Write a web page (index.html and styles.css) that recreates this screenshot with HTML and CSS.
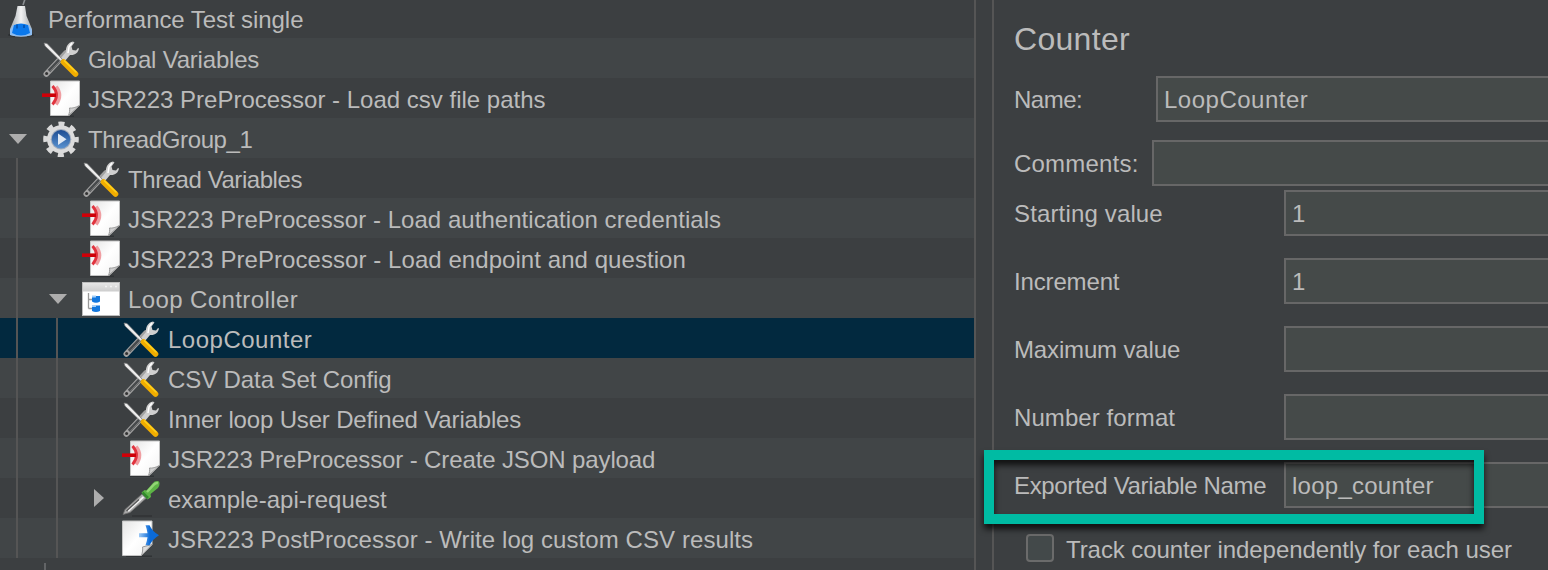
FILE: index.html
```html
<!DOCTYPE html>
<html lang="en">
<head>
<meta charset="utf-8">
<title>Performance Test single</title>
<link rel="stylesheet" href="styles.css">
</head>
<body>
<svg class="defs" width="0" height="0">
  <defs>
    <linearGradient id="paper" x1="0" y1="0" x2="1" y2="1"><stop offset="0" stop-color="#e4e4e4"/><stop offset=".5" stop-color="#fff"/><stop offset="1" stop-color="#f2f2f2"/></linearGradient>
    <linearGradient id="bar" x1="0" y1="0" x2="0" y2="1"><stop offset="0" stop-color="#e6e6e6"/><stop offset="1" stop-color="#cdcdcd"/></linearGradient>
    <linearGradient id="glass" x1="0" y1="0" x2="1" y2="0"><stop offset="0" stop-color="#a0a6aa"/><stop offset=".5" stop-color="#f2f2f2"/><stop offset="1" stop-color="#a4a9ac"/></linearGradient>
    <linearGradient id="blue" x1="0" y1="0" x2="0" y2="1"><stop offset="0" stop-color="#1d4c92"/><stop offset="1" stop-color="#5a92d0"/></linearGradient>
    <linearGradient id="post" gradientUnits="userSpaceOnUse" x1="17" y1="0" x2="28" y2="0"><stop offset="0" stop-color="#9cc8f5"/><stop offset="1" stop-color="#0a6ad8"/></linearGradient>
    <symbol id="flask" viewBox="0 0 38 38">
      <ellipse cx="19" cy="36" rx="13" ry="2" fill="#2b2e30"/>
      <path d="M21 6L23 0" stroke="#8b8f92" stroke-width="1.600"/>
      <path d="M15.500 7h7.500l1.500 10 5.500 13v6q-11 3-22 0v-6l5.500-13z" fill="url(#glass)"/>
      <path d="M11 26h16l3 5v5q-11 3-22 0v-5z" fill="#8dbdf2"/>
      <path d="M12 26q7-3 14 0l2 8q-9 5-18 0z" fill="#0a78ec"/>
      <path d="M15 25.500v4M22 26v3" stroke="#0558b8" stroke-width="2"/>
    </symbol>
    <symbol id="tools" viewBox="0 0 38 38">
      <path d="M4.300 35L24 14" stroke="#a2a2a2" stroke-width="5.600" stroke-linecap="round"/>
      <path d="M7 32L18 20.500" stroke="#484b4d" stroke-width="3.400"/>
      <path d="M8 32.500L18.500 21.500" stroke="#888" stroke-width=".9"/>
      <circle cx="4.600" cy="34.600" r="1.500" fill="#333"/>
      <path d="M19 19l5-6c-.5-5 2-9.500 7-10.500l1.500 1-3 4 1 3.500 3.500.5 2-2.500 1 .5c-1 4.500-4 7-9 6.500l-5 6z" fill="#cfcfcf"/>
      <path d="M26 14l1-6 3-4" stroke="#fff" stroke-width="1.500" fill="none"/>
      <path d="M2 4l3 .5L20.500 20.500l-2 1.500L3 7z" fill="#eee" stroke="#777" stroke-width=".7"/>
      <path d="M21.500 23L33.500 35" stroke="#f1ad00" stroke-width="5.600" stroke-linecap="round"/>
      <path d="M22 21.500L34.500 33.500" stroke="#ffd21c" stroke-width="1.600"/>
    </symbol>
    <symbol id="pre" viewBox="0 0 38 38">
      <path d="M8 37.200h24" stroke="#303335" stroke-width="1.500"/>
      <path d="M8.500 2h29v24.500L27 36.500H8.500z" fill="url(#paper)" stroke="#c4c4c4"/>
      <path d="M37.500 26.500L26.500 36.500c1-3 1.500-5 1-7.500 3 .5 6-.5 10-2.500z" fill="#d0d0d0" stroke="#9a9a9a"/>
      <path d="M13.500 8q6.500 8 0 17" stroke="#f09ea2" stroke-width="5" fill="none"/>
      <path d="M10.500 7q8 9 0 18.500" stroke="#e0343f" stroke-width="2.800" fill="none"/>
      <path d="M0 16.200h14" stroke="#ce0008" stroke-width="3.600"/>
    </symbol>
    <symbol id="postp" viewBox="0 0 38 38">
      <path d="M4 37.200h26" stroke="#303335" stroke-width="1.500"/>
      <path d="M.500 2H30v23.500L19.500 36.500H.500z" fill="url(#paper)" stroke="#c4c4c4"/>
      <path d="M30 25.500L19.500 36.500c1-3 1.500-6 1-8.500z" fill="#ddd" stroke="#9a9a9a"/>
      <path d="M17 14.200h8.500q-.5-4-2-8h4q3 6.500 9.500 10-6.500 4-9.500 10h-4q1.500-4 2-8H17z" fill="url(#post)"/>
    </symbol>
    <symbol id="gear" viewBox="0 0 38 38">
      <circle cx="19" cy="20.300" r="15.500" fill="none" stroke="#dadada" stroke-width="4.600" stroke-dasharray="6 6.174" stroke-dashoffset="3"/>
      <circle cx="19" cy="20.300" r="14" fill="#dcdcdc"/>
      <circle cx="19" cy="20.300" r="10.300" fill="#a3adbd"/>
      <circle cx="19" cy="20.300" r="9.200" fill="url(#blue)"/>
      <path d="M16 14.500l8.500 5.800-8.500 5.800z" fill="#dfe8f4"/>
    </symbol>
    <symbol id="loop" viewBox="0 0 38 38">
      <rect x=".5" y="3.500" width="37" height="33" fill="#fff" stroke="#bdbdbd"/>
      <rect x="1" y="4" width="36" height="8.500" fill="url(#bar)"/>
      <path d="M23 7.500h2M28 7.500h2M33 7.500h2" stroke="#f2f2f2" stroke-width="1.500"/>
      <path d="M6.500 14v15.500M6.500 20.500H10M6.500 29.500H10" stroke="#999" stroke-width="1.300" fill="none"/>
      <path d="M10 17h8v5.500q-4 2.500-8 0zM10 26.500h8V32q-4 2-8 0z" fill="#1478de"/>
      <path d="M10 17.500h4M10 27h4" stroke="#a5cff7" stroke-width="2"/>
    </symbol>
    <symbol id="pipette" viewBox="0 0 38 38">
      <path d="M10 37h20" stroke="#303335" stroke-width="1.500"/>
      <path d="M1 35.500l2-5L20 15l4.500 4L8 33.500z" fill="#a9a9a9" stroke="#707070" stroke-width=".8"/>
      <path d="M6 32L21.500 18" stroke="#f4f4f4" stroke-width="1.800"/>
      <path d="M4.500 32L17 20.500" stroke="#555" stroke-width="1.300"/>
      <path d="M19.500 13.500l3-2.500 2 .5 6-7q3-3.500 6.500-2 1.500 3-1 6.500l-7.500 6 .5 3-3.500 2.500z" fill="#5db546"/>
      <path d="M25 13l7-7.500q2-2 4-1.500" stroke="#93d676" stroke-width="2.500" fill="none"/>
      <path d="M20.500 13.500l5.500 5.500" stroke="#338a2c" stroke-width="2.500"/>
    </symbol>
  </defs>
</svg>
<div class="app">
  <div class="tree">
    <div class="row"><svg class="icon"><use href="#flask"/></svg><span class="label t-plan">Performance Test single</span></div>
    <div class="row"><i class="cell"></i><svg class="icon"><use href="#tools"/></svg><span class="label t-global">Global Variables</span></div>
    <div class="row"><i class="cell"></i><svg class="icon"><use href="#pre"/></svg><span class="label">JSR223 PreProcessor - Load csv file paths</span></div>
    <div class="row"><i class="cell open"></i><svg class="icon"><use href="#gear"/></svg><span class="label t-group">ThreadGroup_1</span></div>
    <div class="row"><i class="cell guide"></i><i class="cell"></i><svg class="icon"><use href="#tools"/></svg><span class="label t-thread">Thread Variables</span></div>
    <div class="row"><i class="cell guide"></i><i class="cell"></i><svg class="icon"><use href="#pre"/></svg><span class="label t-auth">JSR223 PreProcessor - Load authentication credentials</span></div>
    <div class="row"><i class="cell guide"></i><i class="cell"></i><svg class="icon"><use href="#pre"/></svg><span class="label t-endpoint">JSR223 PreProcessor - Load endpoint and question</span></div>
    <div class="row"><i class="cell guide"></i><i class="cell open"></i><svg class="icon"><use href="#loop"/></svg><span class="label t-loop">Loop Controller</span></div>
    <div class="row selected"><i class="cell guide"></i><i class="cell guide"></i><i class="cell"></i><svg class="icon"><use href="#tools"/></svg><span class="label t-counter">LoopCounter</span></div>
    <div class="row"><i class="cell guide"></i><i class="cell guide"></i><i class="cell"></i><svg class="icon"><use href="#tools"/></svg><span class="label t-csv">CSV Data Set Config</span></div>
    <div class="row"><i class="cell guide"></i><i class="cell guide"></i><i class="cell"></i><svg class="icon"><use href="#tools"/></svg><span class="label t-inner">Inner loop User Defined Variables</span></div>
    <div class="row"><i class="cell guide"></i><i class="cell guide"></i><i class="cell"></i><svg class="icon"><use href="#pre"/></svg><span class="label t-json">JSR223 PreProcessor - Create JSON payload</span></div>
    <div class="row"><i class="cell guide"></i><i class="cell guide"></i><i class="cell closed"></i><svg class="icon"><use href="#pipette"/></svg><span class="label">example-api-request</span></div>
    <div class="row"><i class="cell guide"></i><i class="cell guide"></i><i class="cell"></i><svg class="icon"><use href="#postp"/></svg><span class="label t-post">JSR223 PostProcessor - Write log custom CSV results</span></div>
    <div class="row"><i class="tick"></i></div>
  </div>
  <div class="divider"></div>
  <div class="panel">
    <h1 class="title">Counter</h1>
    <div class="field name"><span class="caption">Name:</span><div class="input t-counter">LoopCounter</div></div>
    <div class="field comments"><span class="caption">Comments:</span><div class="input"></div></div>
    <div class="grid">
      <div class="field"><span class="caption t-start">Starting value</span><div class="input">1</div></div>
      <div class="field"><span class="caption t-inc">Increment</span><div class="input">1</div></div>
      <div class="field"><span class="caption t-inc">Maximum value</span><div class="input"></div></div>
      <div class="field"><span class="caption t-post">Number format</span><div class="input"></div></div>
      <div class="field"><span class="caption t-export">Exported Variable Name</span><div class="input t-value">loop_counter</div></div>
    </div>
    <div class="check"><i class="box"></i><span class="t-plan">Track counter independently for each user</span></div>
  </div>
  <div class="highlight"></div>
</div>
</body>
</html>
```
FILE: styles.css
```css
* { box-sizing: border-box; }
body {
  margin: 0;
  overflow: hidden;
  background: #3c3f41;
  color: #bbb;
  font: 24px/40px "Liberation Sans", Arial, sans-serif;
}
.defs { position: absolute; }
.app { position: relative; display: flex; height: 570px; overflow: hidden; }

.tree { flex: none; width: 974px; margin-top: -2px; }
.row { display: flex; height: 40px; white-space: nowrap; }
.row:nth-child(even) { background: #414547; }
.row.selected { background: #02293f; }
.cell { flex: none; display: flex; align-items: center; width: 40px; height: 40px; }
.guide::before { content: ""; width: 2px; height: 40px; margin-left: 16px; background: #555; }
.open::before { content: ""; margin: 2px 0 0 9px; border: solid transparent; border-width: 10px 9px 0; border-top-color: #adadad; }
.closed::before { content: ""; margin-left: 14px; border: solid transparent; border-width: 9px 0 9px 10px; border-left-color: #adadad; }
.tick { width: 2px; height: 10px; margin: 5px 0 0 44px; background: #626466; }
.icon { flex: none; width: 38px; height: 38px; margin: 1px 8px 0 2px; }
.label { padding-top: 2px; }

/* Tracking */
.t-plan { letter-spacing: -.07px; }
.t-global { letter-spacing: -.2px; }
.t-group { letter-spacing: -.38px; }
.t-thread { letter-spacing: -.44px; }
.t-auth { letter-spacing: .04px; }
.t-endpoint { letter-spacing: .06px; }
.t-loop { letter-spacing: .4px; }
.t-counter { letter-spacing: .5px; }
.t-csv { letter-spacing: -.1px; }
.t-inner { letter-spacing: -.16px; }
.t-json { letter-spacing: -.12px; }
.t-post { letter-spacing: .08px; }
.t-start { letter-spacing: .15px; }
.t-inc { letter-spacing: -.15px; }
.t-export { letter-spacing: -.34px; }
.t-value { letter-spacing: .25px; }

.divider { flex: none; width: 20px; border: solid #555; border-width: 0 2px; }
.panel { flex: 1; min-width: 0; padding: 19px 0 0 20px; white-space: nowrap; }
.title { height: 40px; margin: 0 0 17px; font-size: 32px; font-weight: 400; line-height: 40px; letter-spacing: .3px; }
.field { display: flex; height: 46px; line-height: 46px; }
.caption { flex: none; padding-top: 1px; }
.name { margin-bottom: 18px; }
.name .caption { width: 142px; letter-spacing: -.5px; }
.comments { margin-bottom: 4px; }
.comments .caption { width: 138px; letter-spacing: .2px; }
.grid { display: grid; gap: 22px; }
.grid .caption { width: 270px; }
.input { flex: 1; height: 46px; padding: 1px 0 0 6px; line-height: 42px; border: 2px solid #676767; border-right: 0; background: #454a49; }
.check { display: flex; align-items: center; height: 28px; margin: 26px 0 0 12px; line-height: 28px; }
.box { flex: none; width: 28px; height: 28px; margin-right: 12px; border: 2px solid #6b6b6b; border-radius: 4px; background: #43494a; }
.check span { padding-top: 4px; }

/* Callout frame drawn over the last field */
.highlight {
  position: absolute;
  left: 984px;
  top: 450px;
  width: 500px;
  height: 74px;
  border: 10px solid #00bba3;
  filter: drop-shadow(0 5px 3px rgba(0, 0, 0, .75));
}
```
